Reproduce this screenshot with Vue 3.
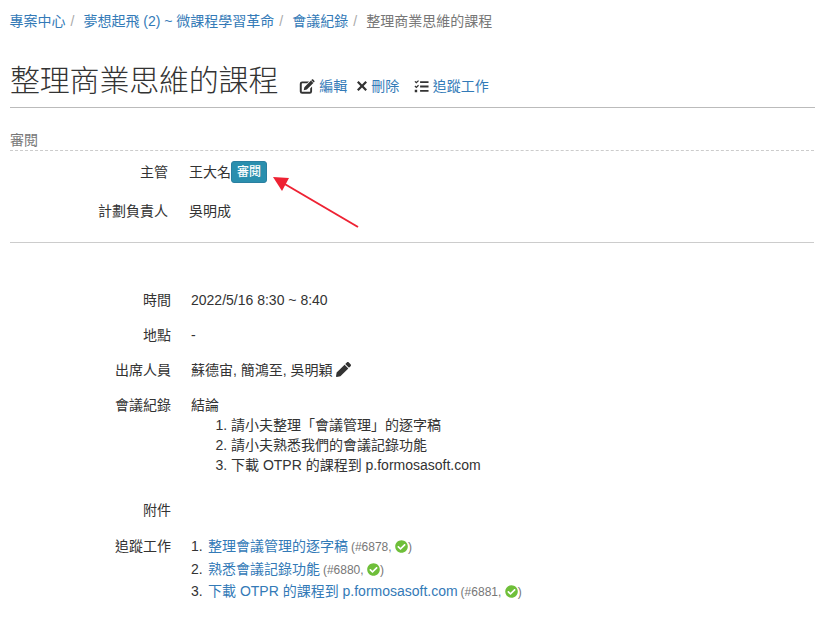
<script setup>
const reviewers = [
  { label: '主管', name: '王大名', badge: '審閱' },
  { label: '計劃負責人', name: '吳明成' }
]
const minutes = ['請小夫整理「會議管理」的逐字稿', '請小夫熟悉我們的會議記錄功能', '下載 OTPR 的課程到 p.formosasoft.com']
const tasks = [
  { text: '整理會議管理的逐字稿', id: '#6878' },
  { text: '熟悉會議記錄功能', id: '#6880' },
  { text: '下載 OTPR 的課程到 p.formosasoft.com', id: '#6881' }
]
</script>

<template>
  <div class="page">
    <nav class="crumbs">
      <a>專案中心</a><span class="sep">/</span>
      <a>夢想起飛 (2) ~ 微課程學習革命</a><span class="sep">/</span>
      <a>會議紀錄</a><span class="sep">/</span>
      <span class="current">整理商業思維的課程</span>
    </nav>

    <header class="head">
      <h1>整理商業思維的課程</h1>
      <div class="actions">
        <a class="act">
          <svg class="ico" viewBox="0 0 16 16"><path d="M2.800 2.600h7.400L8.200 4.600H3a.6.6 0 0 0-.6.6v7.800a.6.6 0 0 0 .6.6h7.800a.6.6 0 0 0 .6-.6V10l2-2v5.300a2.500 2.500 0 0 1-2.400 2.400H2.800A2.500 2.500 0 0 1 .3 13.300V5A2.500 2.500 0 0 1 2.800 2.600z"/><path d="M12.200 1.600l2.600 2.600-7 7.100-3.300.7.700-3.300zM13.200.6c.4-.4 1-.4 1.400 0l1.200 1.200c.4.4.4 1 0 1.400l-.6.6-2.600-2.600z"/></svg>編輯
        </a>
        <a class="act">
          <svg class="ico x" viewBox="0 0 12 12"><path d="M2.600 1 6 4.400 9.400 1 11 2.600 7.600 6 11 9.400 9.400 11 6 7.600 2.600 11 1 9.400 4.400 6 1 2.600z"/></svg>刪除
        </a>
        <a class="act tasks">
          <svg class="ico t" viewBox="0 0 16 14"><path d="M.5 2 1.500 1l1 1L4.400.2l.9.9L2.500 3.900zM.5 7 1.500 6l1 1 1.900-1.800.9.9-2.800 2.800zM.8 10.400h2.600V13H.8zM6.500 1.300h9v2h-9zM6.500 6h9v2h-9zM6.500 10.700h9v2h-9z"/></svg>追蹤工作
        </a>
      </div>
    </header>

    <section class="review">
      <div class="legend">審閱</div>
      <div class="review-rows">
        <div v-for="r in reviewers" :key="r.label" class="rrow">
          <div class="rlabel">{{ r.label }}</div>
          <div class="rval">{{ r.name }}<span v-if="r.badge" class="badge">{{ r.badge }}</span></div>
        </div>
      </div>
      <svg class="arrow" viewBox="0 0 92 56" width="92" height="56">
        <path d="M88 53 13 9" stroke="#ee2233" stroke-width="2" fill="none"/>
        <path d="M3 3 19 4 12 17z" fill="#ee2233"/>
      </svg>
    </section>

    <section class="details">
      <div class="row"><div class="label">時間</div><div>2022/5/16 8:30 ~ 8:40</div></div>
      <div class="row"><div class="label">地點</div><div>-</div></div>
      <div class="row">
        <div class="label">出席人員</div>
        <div class="att">蘇德宙, 簡鴻至, 吳明穎
          <svg class="pen" viewBox="0 0 512 512"><path d="M497.900 142.100l-46.100 46.100c-4.700 4.700-12.300 4.700-17 0l-111-111c-4.700-4.700-4.700-12.300 0-17l46.100-46.100c18.700-18.700 49.100-18.700 67.900 0l60.100 60.100c18.800 18.700 18.800 49.100 0 67.900zM284.200 99.800L21.600 362.400.4 483.900c-2.900 16.400 11.400 30.600 27.800 27.800l121.500-21.300 262.600-262.600c4.700-4.700 4.700-12.300 0-17l-111-111c-4.800-4.700-12.400-4.700-17.100 0z"/></svg>
        </div>
      </div>
      <div class="row notes">
        <div class="label">會議紀錄</div>
        <div>
          結論
          <ol class="minutes"><li v-for="m in minutes" :key="m">{{ m }}</li></ol>
        </div>
      </div>
      <div class="row attach"><div class="label">附件</div><div></div></div>
      <div class="row">
        <div class="label">追蹤工作</div>
        <ol class="tasklist">
          <li v-for="(t, i) in tasks" :key="t.id">
            <span class="num">{{ i + 1 }}.</span>
            <a>{{ t.text }}</a>&nbsp;<span class="meta">({{ t.id }},
              <svg class="ok" viewBox="0 0 512 512"><circle cx="256" cy="256" r="180" fill="#fff"/><path fill="#6fbf3a" d="M504 256c0 136.967-111.033 248-248 248S8 392.967 8 256 119.033 8 256 8s248 111.033 248 248zM227.314 387.314l184-184c6.248-6.248 6.248-16.379 0-22.627l-22.627-22.627c-6.248-6.249-16.379-6.249-22.628 0L216 308.118l-70.059-70.059c-6.248-6.248-16.379-6.248-22.628 0l-22.627 22.627c-6.248 6.248-6.248 16.379 0 22.627l104 104c6.249 6.25 16.379 6.25 22.628.001z"/></svg>)</span>
          </li>
        </ol>
      </div>
    </section>
  </div>
</template>

<style scoped>
.page {
  box-sizing: border-box;
  width: 827px;
  height: 631px;
  padding: 0 12px 0 10px;
  overflow: hidden;
  font: 14px/20px "Liberation Sans", "Noto Sans CJK TC", sans-serif;
  color: #333;
  background: #fff;
}
a { color: #337ab7; text-decoration: none; }
.crumbs { padding-top: 11px; height: 20px; margin-left: -0.5px; }
.sep { color: #aaa; padding: 0 9px 0 5px; }
.current { color: #777; }
.head {
  display: flex;
  align-items: flex-end;
  margin-top: 29px;
  height: 47px;
  border-bottom: 1px solid #bbb;
}
h1 {
  margin: 0 0 8px;
  font-size: 30px;
  line-height: 36px;
  font-weight: 300;
  letter-spacing: -0.2px;
}
.actions { display: flex; margin-left: 21px; margin-bottom: 11px; }
.act { display: flex; align-items: center; margin-right: 9px; }
.act.tasks { margin-left: 6px; }
.ico { width: 16px; height: 15px; margin-right: 4px; fill: #333; }
.ico.x { width: 12px; height: 12px; margin-right: 3px; }
.ico.t { width: 15px; margin-right: 3.5px; }
.review {
  position: relative;
  box-sizing: border-box;
  height: 135px;
  padding-top: 21px;
  border-bottom: 1px solid #ccc;
  width: 804px;
}
.legend {
  color: #777;
  border-bottom: 1px dashed #ccc;
  line-height: 20px;
  padding-top: 1px;
}
.review-rows { padding-top: 11px; }
.rrow { display: flex; height: 39px; }
.rlabel { width: 158px; margin-right: 21px; text-align: right; }
.rval { display: flex; align-items: center; height: 20px; }
.badge {
  flex: none;
  box-sizing: border-box;
  width: 36px;
  height: 22px;
  line-height: 20px;
  font-size: 12px;
  font-weight: 500;
  text-align: center;
  color: #fff;
  background: #2a8fae;
  border: 1px solid #2a7fa0;
  border-radius: 3px;
}
.arrow { position: absolute; left: 260px; top: 66px; }
.details { padding-top: 47px; }
.row { display: flex; margin-bottom: 15px; }
.label { width: 161px; margin-right: 20px; text-align: right; flex: none; }
.pen { width: 15px; height: 15px; fill: #333; vertical-align: -2px; }
.minutes { margin: 0; padding-left: 40px; }
.notes { margin-bottom: 25px; }
.attach { margin-bottom: 16px; }
.tasklist { margin: -1px 0 0; padding: 0; list-style: none; }
.tasklist li { height: 22.5px; line-height: 22.5px; display: flex; align-items: baseline; }
.num { width: 17px; flex: none; }
.tasklist .meta { color: #777; font-size: 12px; margin-left: -1px; }
.ok { width: 13px; height: 13px; vertical-align: -2px; }
</style>
